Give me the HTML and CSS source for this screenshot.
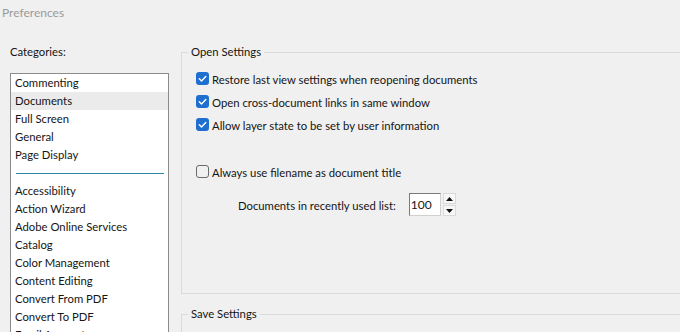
FILE: index.html
```html
<!DOCTYPE html>
<html>
<head>
<meta charset="utf-8">
<link rel="stylesheet" href="styles.css">
</head>
<body>
<div class="title">Preferences</div>
<div class="main">
  <div class="left">
    <div class="cat-label">Categories:</div>
    <div class="list">
      <div class="item">Commenting</div>
      <div class="item selected">Documents</div>
      <div class="item">Full Screen</div>
      <div class="item">General</div>
      <div class="item">Page Display</div>
      <div class="sep"><div class="sep-line"></div></div>
      <div class="item">Accessibility</div>
      <div class="item">Action Wizard</div>
      <div class="item">Adobe Online Services</div>
      <div class="item">Catalog</div>
      <div class="item">Color Management</div>
      <div class="item">Content Editing</div>
      <div class="item">Convert From PDF</div>
      <div class="item">Convert To PDF</div>
      <div class="item">Email Accounts</div>
    </div>
  </div>
  <div class="right">
    <fieldset class="group open">
      <legend>Open Settings</legend>
      <div class="row"><span class="cb checked"><svg viewBox="0 0 13 13" width="13" height="13"><path d="M3.3 6.8 L5.5 9 L9.8 4.4" fill="none" stroke="#fff" stroke-width="1.4" stroke-linecap="round" stroke-linejoin="round"/></svg></span><span class="lbl">Restore last view settings when reopening documents</span></div>
      <div class="row"><span class="cb checked"><svg viewBox="0 0 13 13" width="13" height="13"><path d="M3.3 6.8 L5.5 9 L9.8 4.4" fill="none" stroke="#fff" stroke-width="1.4" stroke-linecap="round" stroke-linejoin="round"/></svg></span><span class="lbl">Open cross-document links in same window</span></div>
      <div class="row"><span class="cb checked"><svg viewBox="0 0 13 13" width="13" height="13"><path d="M3.3 6.8 L5.5 9 L9.8 4.4" fill="none" stroke="#fff" stroke-width="1.4" stroke-linecap="round" stroke-linejoin="round"/></svg></span><span class="lbl">Allow layer state to be set by user information</span></div>
      <div class="row spaced"><span class="cb"></span><span class="lbl">Always use filename as document title</span></div>
      <div class="row recent">
        <span class="lbl">Documents in recently used list:</span>
        <span class="num">100</span>
        <span class="spin">
          <span class="spin-btn"><svg viewBox="0 0 7 4" width="7" height="4"><path d="M0 4 L3.5 0 L7 4 Z" fill="#111"/></svg></span>
          <span class="spin-btn"><svg viewBox="0 0 7 4" width="7" height="4"><path d="M0 0 L3.5 4 L7 0 Z" fill="#111"/></svg></span>
        </span>
      </div>
    </fieldset>
    <fieldset class="group save">
      <legend>Save Settings</legend>
      <div class="row"></div>
    </fieldset>
  </div>
</div>
</body>
</html>
```

FILE: styles.css
```css
html, body {
  margin: 0;
  padding: 0;
  background: #f0f0f0;
  width: 680px;
  height: 332px;
  overflow: hidden;
}
body {
  font-family: Lato, "Open Sans", sans-serif;
  font-size: 11.3px;
  color: #151515;
}
.title {
  height: 44px;
  box-sizing: border-box;
  padding: 5px 0 0 2px;
  line-height: 16px;
  font-size: 12px;
  color: #9a9a9a;
}
.main {
  display: flex;
}
.left {
  width: 181px;
  flex: none;
  box-sizing: border-box;
  padding-left: 10px;
}
.cat-label {
  line-height: 16px;
}
.list {
  margin-top: 13px;
  width: 159px;
  height: 320px;
  box-sizing: border-box;
  border: 1px solid #8c8c8c;
  background: #fff;
}
.item {
  height: 18px;
  line-height: 18px;
  padding-left: 4px;
  white-space: nowrap;
}
.item.selected {
  background: #ebebeb;
}
.sep {
  height: 18px;
  display: flex;
  align-items: center;
  padding: 0 4px 0 5px;
}
.sep-line {
  flex: 1;
  height: 1px;
  background: #2a8aa6;
}
.right {
  flex: none;
  width: 560px;
}
.group {
  margin: 0;
  border: 1px solid #dadada;
  padding: 7px 0 0 14px;
}
.group legend {
  margin-left: -8px;
  padding: 0 3px;
  line-height: 16px;
}
.group.open {
  padding-bottom: 77px;
}
.group.save {
  margin-top: 12px;
  height: 40px;
}
.row {
  display: flex;
  align-items: center;
  height: 23px;
  white-space: nowrap;
}
.row.spaced {
  margin-top: 24px;
}
.lbl {
  padding-top: 1px;
}
.cb {
  width: 13px;
  height: 13px;
  box-sizing: border-box;
  border: 1px solid #6a6a6a;
  border-radius: 3px;
  flex: none;
  display: flex;
  align-items: center;
  justify-content: center;
  margin-right: 3px;
}
.cb svg {
  display: block;
}
.cb.checked {
  border: none;
  background: #1f6fd0;
}
.row.recent {
  margin-top: 10px;
  padding-left: 42px;
}
.num {
  margin-left: 13px;
  width: 32px;
  height: 23px;
  box-sizing: border-box;
  border: 1px solid #d0d0d0;
  border-top-color: #7a7a7a;
  border-left-color: #7a7a7a;
  background: #fff;
  line-height: 22px;
  padding-left: 1px;
  font-size: 12px;
}
.spin {
  margin-left: 2px;
  display: flex;
  flex-direction: column;
  gap: 1px;
}
.spin-btn {
  width: 13px;
  height: 11px;
  box-sizing: border-box;
  border: 1px solid #dadada;
  background: #f7f7f7;
  display: flex;
  align-items: center;
  justify-content: center;
}
.spin-btn svg {
  display: block;
}
```
